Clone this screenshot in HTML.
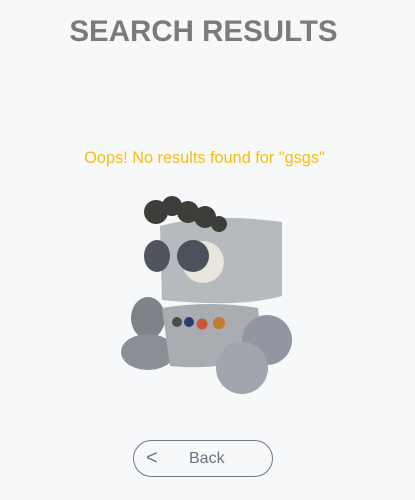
<!DOCTYPE html>
<html><head><meta charset="utf-8"><style>
html,body{margin:0;padding:0;background:#f7f8fa;width:415px;height:500px;overflow:hidden;font-family:"Liberation Sans",sans-serif;position:relative}
h1{position:absolute;top:15px;left:-4px;width:415px;margin:0;text-align:center;font-size:29.5px;font-weight:bold;color:#7b7b7b}
.msg{position:absolute;top:149px;left:-3px;width:415px;text-align:center;font-size:16.3px;color:#f9bd10}
.btn{position:absolute;left:133px;top:440px;width:138px;height:35px;border:1.3px solid #737884;border-radius:19px;color:#6b7280;font-size:16px}
.btn .l{position:absolute;left:12px;top:6px;font-size:20px}
.btn .t{position:absolute;left:55px;top:9px}
svg{position:absolute;left:0;top:0}
</style></head><body>
<h1>SEARCH RESULTS</h1>
<div class="msg">Oops! No results found for "gsgs"</div>
<svg width="415" height="500">
<ellipse cx="148" cy="318" rx="17" ry="21" fill="#7e8389"/>
<ellipse cx="148" cy="352" rx="27" ry="18" fill="#8a8f95"/>
<path d="M162 308 Q210 300 258 308 L262 350 Q230 372 170 366 Z" fill="#a9adb2"/>
<path d="M160 226 Q210 212 282 222 L282 296 Q240 308 162 300 Z" fill="#b6babe"/>
<circle cx="156" cy="212" r="12" fill="#3b3e39"/>
<circle cx="172" cy="206" r="10" fill="#3b3e39"/>
<circle cx="188" cy="212" r="11" fill="#3b3e39"/>
<circle cx="205" cy="217" r="11" fill="#3b3e39"/>
<circle cx="219" cy="224" r="8" fill="#3b3e39"/>
<ellipse cx="157" cy="256" rx="13" ry="16" fill="#4e555d"/>
<circle cx="203" cy="262" r="21" fill="#e7e5dc"/>
<circle cx="193" cy="256" r="16" fill="#4a525b"/>
<circle cx="267" cy="340" r="25" fill="#9296a0"/>
<circle cx="242" cy="368" r="26" fill="#a1a6ae"/>
<circle cx="177" cy="322" r="5" fill="#4b4d48"/>
<circle cx="189" cy="322" r="5" fill="#2e3c6a"/>
<circle cx="202" cy="324" r="5.5" fill="#c7573a"/>
<circle cx="219" cy="323" r="6" fill="#c27a2c"/>
</svg>
<div class="btn"><span class="l">&lt;</span><span class="t">Back</span></div>
</body></html>
